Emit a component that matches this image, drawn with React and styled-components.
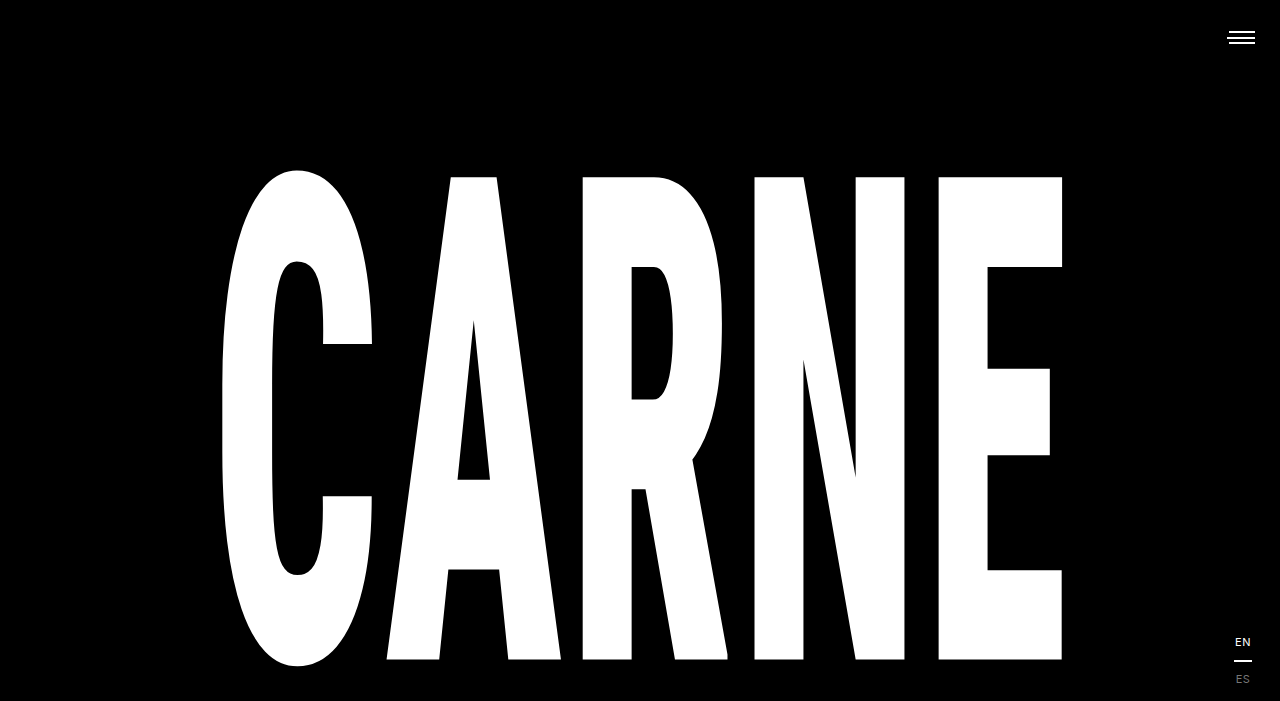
import React from 'react';
import styled, { createGlobalStyle } from 'styled-components';

const Global = createGlobalStyle`
  html, body { margin: 0; height: 100%; background: #000; overflow: hidden; }
  #root { height: 100%; }
`;

const Page = styled.div`
  position: relative;
  height: 701px;
  background: #000;
  color: #fff;
  overflow: hidden;
`;

const Hero = styled.main`
  display: flex;
  justify-content: center;
  padding-top: 185px;
  padding-left: 5px;
`;

// condensed display type: Roboto black at its narrowest width, stretched tall
const Title = styled.h1`
  margin: 0;
  flex: none;
  font-family: Roboto, "Open Sans", sans-serif;
  font-weight: 900;
  font-stretch: 75%;
  font-size: 293px;
  line-height: 0.72;
  letter-spacing: 0.02em;
  white-space: nowrap;
  transform: scaleY(2.315);
  transform-origin: center top;
`;

const MenuButton = styled.button`
  position: absolute;
  top: 29px;
  right: 23px;
  width: 32px;
  height: 17px;
  padding: 2px;
  border: 0;
  background: none;
  display: flex;
  flex-direction: column;
  align-items: flex-end;
  justify-content: space-between;
  cursor: pointer;
`;

const Bar = styled.span`
  display: block;
  height: 2px;
  width: ${p => p.w}px;
  background: #fff;
`;

const Lang = styled.nav`
  position: absolute;
  right: 28px;
  bottom: 15px;
  display: flex;
  flex-direction: column;
  align-items: center;
  gap: 11px;
  font-family: Inter, "Liberation Sans", sans-serif;
  font-size: 11px;
  font-weight: 400;
  letter-spacing: 0.04em;
`;

const LangItem = styled.a`
  color: ${p => (p.active ? '#fff' : '#777')};
  text-decoration: none;
  line-height: 13px;
  display: flex;
  flex-direction: column;
  align-items: center;
  gap: 11px;
  &::after {
    content: '';
    display: ${p => (p.active ? 'block' : 'none')};
    width: 18px;
    height: 2px;
    background: #fff;
  }
`;

export default function App() {
  return (
    <Page>
      <Global />
      <MenuButton aria-label="Menu">
        <Bar w={26} />
        <Bar w={28} />
        <Bar w={26} />
      </MenuButton>
      <Hero>
        <Title>CARNE</Title>
      </Hero>
      <Lang>
        <LangItem active href="#">EN</LangItem>
        <LangItem href="#">ES</LangItem>
      </Lang>
    </Page>
  );
}
